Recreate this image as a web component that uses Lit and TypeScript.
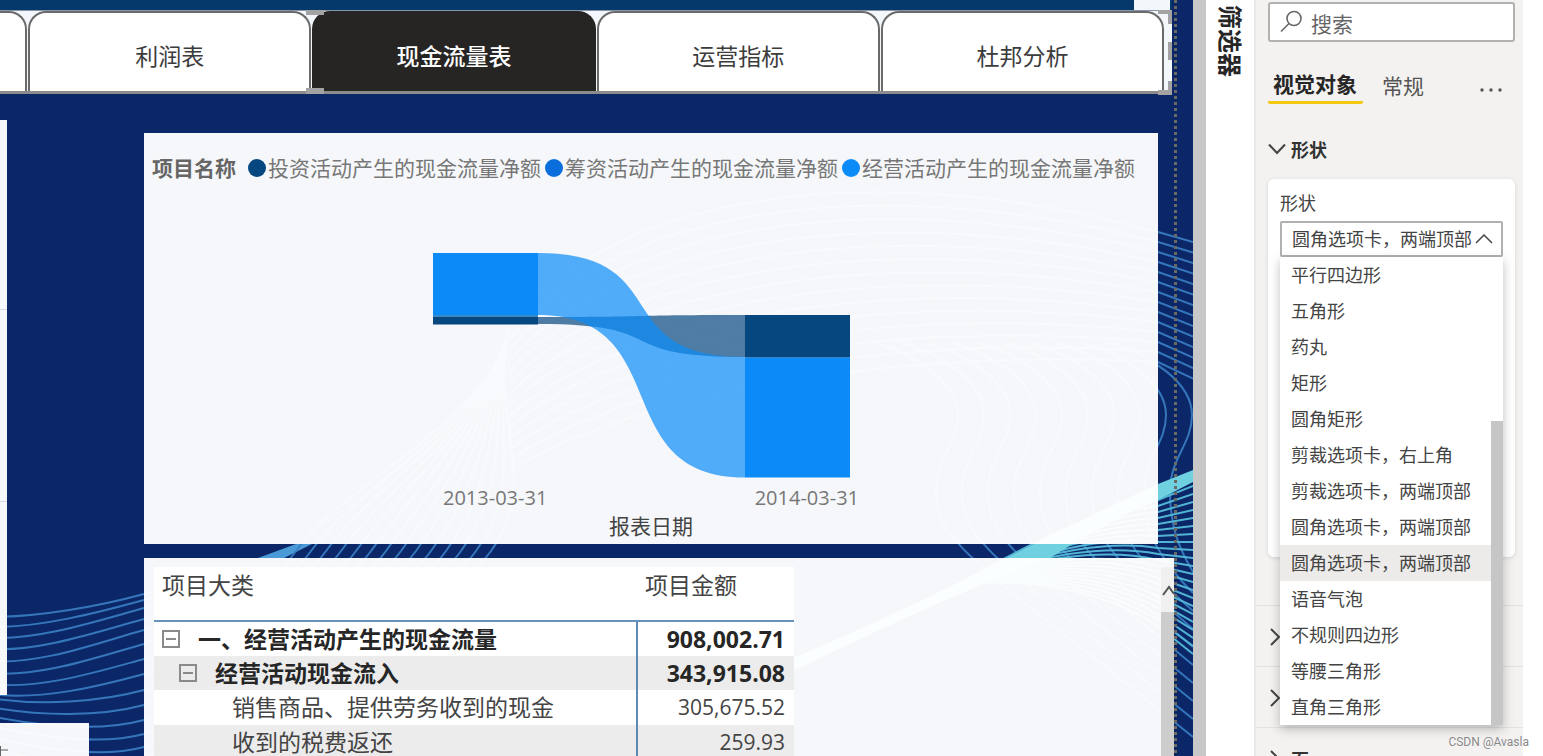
import { LitElement, html, svg, css } from "lit";
import { customElement, property, state } from "lit/decorators.js";
import { classMap } from "lit/directives/class-map.js";

const range = (n: number) => Array.from({ length: n }, (_, i) => i);

@customElement("wave-backdrop")
class WaveBackdrop extends LitElement {
  static styles = css`
    :host { display: block; position: absolute; inset: 0; }
    svg { width: 100%; height: 100%; display: block; }
    .wave { fill: none; stroke: #3a80c4; stroke-width: 2; opacity: 0.9; }
    .fan { fill: none; stroke: #52b4d4; stroke-width: 2; }
    .ribbon { fill: #6fd0e0; }
  `;

  private leftStart = [617, 627, 638, 649, 661, 673, 684, 694, 698, 707, 716, 726, 737, 748];
  private leftMid = [594, 600, 608, 619, 630, 644, 659, 674, 690, 705, 720, 734, 747, 758];

  render() {
    return html`
      <svg viewBox="0 0 1193 756" preserveAspectRatio="xMaxYMin slice" aria-hidden="true">
        <path fill="#4a9ad8" d="M258 558 L296 544 L312 544 L284 558 Z" />
        ${this.leftStart.map((y, i) => {
          const m = this.leftMid[i];
          const x = 296 + i * 15;
          return svg`<path class="wave" d="M-10 ${y} C40 ${y + i} 100 ${m + 12} 144 ${m} C230 ${m - 30} ${x - 50} 620 ${x} 551 S490 420 508 330" />`;
        })}
        ${range(14).map((i) => {
          const y = 232 + i * 10;
          return svg`<path class="wave" d="M508 ${330 + i * 11} C600 ${200 + i * 16} 860 ${150 + i * 15} 1158 ${y} L1193 ${y + 10 + i / 2}" />`;
        })}
        ${range(10).map((i) => {
          const s = i * 26;
          return svg`<path class="wave" d="M${1110 - s} 343 C${1150 - s} 355 ${1192 - s} 382 ${1192 - s} 415 C${1192 - s} 445 ${1168 - s} 460 ${1170 - s} 495 C${1171 - s} 530 ${1180 - s + i} 550 ${1193 - s * 0.4} ${572 + i * 10} L1193 ${575 + i * 18}" />`;
        })}
        ${range(22).map((j) => svg`<path class="fan" d="M960 584 Q1080 ${512 + j * 3} 1158 ${500 + j * 6} L1193 ${486 + j * 8}" />`)}
        <path class="ribbon" d="M1193 470 L1158 484 Q1080 520 1007 558 Q880 624 740 680 L800 668 Q960 590 1050 558 Q1110 520 1158 500 L1193 482 Z" />
      </svg>
    `;
  }
}

@customElement("page-tabs")
class PageTabs extends LitElement {
  static styles = css`
    :host { display: block; position: relative; margin-right: 21px; }
    .strip {
      display: flex; gap: 1px; height: 84px; box-sizing: border-box; padding-right: 8px;
      background: #f3f6fa; border-top: 1px solid #8496a8; border-bottom: 3px solid #8c8c8c;
    }
    button {
      flex: 1; margin: 0; padding: 8px 0 0; font: inherit; font-size: 23px; line-height: 32px;
      color: #3c3c3c; background: #fff; border: 2px solid #6a6a6a; border-bottom: 0;
      border-radius: 18px 18px 0 0;
    }
    .cut { flex: 0 0 27px; border-left: 0; border-radius: 0 18px 0 0; }
    .on { color: #fff; background: #262523; border-color: #262523; font-weight: 500; }
    .grip { position: absolute; background: #a3a3a3; }
    .tl { left: 306px; top: 0; width: 18px; height: 5px; }
    .bl { left: 306px; bottom: 0; width: 18px; height: 6px; }
    .corner { position: absolute; right: 0; width: 14px; height: 14px; box-sizing: border-box; border: 0 solid #a3a3a3; }
    .tr { top: 0; border-width: 4px 4px 0 0; }
    .br { bottom: -1px; border-width: 0 4px 5px 0; }
    .mid { right: 0; top: 32px; width: 4px; height: 18px; }
  `;
  @state() private active = "现金流量表";

  render() {
    return html`
      <div class="strip">
        <button class="cut" aria-label="上一页"></button>
        ${["利润表", "现金流量表", "运营指标", "杜邦分析"].map(
          (t) => html`<button class=${classMap({ on: t === this.active })} @click=${() => (this.active = t)}>${t}</button>`
        )}
      </div>
      <span class="grip tl"></span><span class="grip bl"></span><span class="grip mid"></span>
      <span class="corner tr"></span><span class="corner br"></span>
    `;
  }
}

@customElement("flow-chart")
class FlowChart extends LitElement {
  static styles = css`
    :host { display: block; box-sizing: border-box; height: 411px; padding: 22px 8px 0; background: rgba(255, 255, 255, 0.965); }
    .legend { display: flex; align-items: center; gap: 4px; font-size: 21px; line-height: 26px; color: #777; white-space: nowrap; }
    .name { font-weight: 700; color: #666; margin-right: 8px; }
    .item { display: flex; align-items: center; gap: 2px; }
    .dot { width: 18px; height: 18px; border-radius: 50%; }
    .navy { background: #07477f; }
    .mid { background: #0a6fdc; }
    .sky { background: #0a8bf8; }
    .plot { display: block; width: 438px; height: 230px; margin: 69px auto 6px; }
    .axis { display: flex; justify-content: space-between; width: 416px; margin: 0 auto; font-size: 20px; line-height: 24px; color: #777; }
    .title { margin: 2px 0 0; text-align: center; font-size: 21px; line-height: 28px; color: #444; }
  `;
  render() {
    return html`
      <div class="legend">
        <span class="name">项目名称</span>
        <span class="item"><i class="dot navy"></i>投资活动产生的现金流量净额</span>
        <span class="item"><i class="dot mid"></i>筹资活动产生的现金流量净额</span>
        <span class="item"><i class="dot sky"></i>经营活动产生的现金流量净额</span>
      </div>
      <svg class="plot" viewBox="432 250 438 230" role="img" aria-label="现金流量净额">
        <path fill="#07477f" fill-opacity=".7" d="M538 317 C677 317 606 315 745 315 V357 C606 357 677 324 538 324 Z" />
        <path fill="#0a8bf8" fill-opacity=".7" d="M538 253 C677 253 606 357 745 357 V477.500 C606 477.500 677 315 538 315 Z" />
        <rect x="433" y="253" width="105" height="62" fill="#0a8bf8" />
        <rect x="433" y="315" width="105" height="2" fill="#3b86c4" />
        <rect x="433" y="317" width="105" height="7.500" fill="#07477f" />
        <rect x="745" y="315" width="105" height="42" fill="#07477f" />
        <rect x="745" y="357" width="105" height="1" fill="#3b86c4" />
        <rect x="745" y="358" width="105" height="119.500" fill="#0a8bf8" />
      </svg>
      <div class="axis"><span>2013-03-31</span><span>2014-03-31</span></div>
      <p class="title">报表日期</p>
    `;
  }
}

interface Row { label: string; value: string; level: number; }

@customElement("cash-table")
class CashTable extends LitElement {
  static styles = css`
    :host { display: grid; grid-template-columns: 1fr 13px; flex: 1; min-height: 0; padding-top: 9px; background: rgba(255, 255, 255, 0.965); }
    table { border-collapse: collapse; table-layout: fixed; width: 640px; margin-left: 10px; align-self: start; font-size: 23px; color: #444; background: #fff; }
    th, td { padding: 0; white-space: nowrap; }
    thead th { height: 54px; box-sizing: border-box; border-bottom: 2px solid #6a93ba; font-weight: 400; text-align: left; vertical-align: top; line-height: 36px; padding-left: 8px; }
    .amount { width: 157px; }
    tbody tr { height: 34px; line-height: 34px; }
    tbody tr.level2 { height: 35px; line-height: 35px; }
    tbody tr:nth-child(even) { background: #ececec; }
    tbody th { font-weight: inherit; text-align: left; border-right: 2px solid #5e8ab3; }
    tbody td { text-align: right; padding-right: 9px; }
    .strong { font-weight: 700; color: #262626; }
    .cell { display: flex; align-items: center; gap: 18px; }
    .level0 .cell { padding-left: 8px; }
    .level1 .cell { padding-left: 25px; }
    .level2 .cell { padding-left: 78px; }
    .level2 td { font-size: 21px; }
    button { width: 18px; height: 18px; padding: 0; box-sizing: border-box; border: 2px solid #8a8a8a; background: none; display: grid; place-items: center; }
    .minus { width: 10px; height: 2px; background: #8a8a8a; }
    .scroll { display: flex; flex-direction: column; }
    .up { height: 45px; background: #f0f0f0; display: flex; align-items: center; justify-content: center; }
    .up svg { width: 13px; height: 12px; }
    .thumb { flex: 1; background: #cdcdcd; }
  `;
  @property({ attribute: false }) rows: Row[] = [
    { label: "一、经营活动产生的现金流量", value: "908,002.71", level: 0 },
    { label: "经营活动现金流入", value: "343,915.08", level: 1 },
    { label: "销售商品、提供劳务收到的现金", value: "305,675.52", level: 2 },
    { label: "收到的税费返还", value: "259.93", level: 2 },
  ];
  render() {
    return html`
      <table>
        <thead><tr><th scope="col">项目大类</th><th class="amount" scope="col">项目金额</th></tr></thead>
        <tbody>
          ${this.rows.map(
            (r) => html`<tr class="level${r.level} ${r.level < 2 ? "strong" : ""}">
              <th scope="row"><div class="cell">
                ${r.level < 2 ? html`<button aria-label="折叠"><span class="minus"></span></button>` : ""}
                <span>${r.label}</span>
              </div></th>
              <td>${r.value}</td>
            </tr>`
          )}
        </tbody>
      </table>
      <div class="scroll">
        <div class="up"><svg viewBox="0 0 13 12"><path d="M2 11 L8 3 L13 10" fill="none" stroke="#555" stroke-width="2" /></svg></div>
        <div class="thumb"></div>
      </div>
    `;
  }
}

@customElement("report-canvas")
class ReportCanvas extends LitElement {
  static styles = css`
    :host { display: flex; flex-direction: column; position: relative; overflow: hidden; background: #0b2768; min-width: 0; }
    .band { position: relative; display: flex; justify-content: flex-end; height: 10px; margin-right: 21px; background: #05396c; }
    .gap { width: 36px; margin-right: 2px; background: #f3f6fa; }
    .body { position: relative; flex: 1; min-height: 0; display: flex; }
    .side { flex: 0 0 144px; display: flex; flex-direction: column; gap: 28px; padding-top: 26px; }
    .card { background: rgba(255, 255, 255, 0.965); }
    .tall { width: 7px; height: 575px; display: grid; grid-template-rows: 190px 192px 1fr; }
    .cell { border-bottom: 1px solid #d3dbe6; }
    .cell:last-child { border: 0; }
    .low { width: 89px; flex: 1; display: flex; align-items: flex-end; }
    .low svg { width: 10px; height: 12px; }
    .main { flex: 1; min-width: 0; display: flex; flex-direction: column; gap: 14px; padding-top: 39px; }
    flow-chart { margin-right: 35px; }
    cash-table { margin-right: 19px; }
    .edge { position: absolute; top: 0; bottom: 0; right: 16px; width: 3px; background: repeating-linear-gradient(#6b6a62 0 3px, transparent 3px 6px); }
  `;
  render() {
    return html`
      <wave-backdrop></wave-backdrop>
      <div class="band"><div class="gap"></div></div>
      <page-tabs></page-tabs>
      <div class="body">
        <div class="side">
          <div class="card tall"><div class="cell"></div><div class="cell"></div><div class="cell"></div></div>
          <div class="card low"><svg viewBox="0 0 10 12"><path d="M0 2 H1 V12 H0 Z" fill="#666" /><path d="M1 6 H8" stroke="#aaa" stroke-width="2" /></svg></div>
        </div>
        <div class="main"><flow-chart></flow-chart><cash-table></cash-table></div>
      </div>
      <div class="edge"></div>
    `;
  }
}

@customElement("format-pane")
class FormatPane extends LitElement {
  static styles = css`
    :host { display: flex; flex-direction: column; box-sizing: border-box; border-left: 2px solid #e9e8e7; background: #f3f2f1; overflow: hidden; padding-top: 2px; }
    button { font: inherit; color: inherit; background: none; border: 0; padding: 0; margin: 0; }
    svg { display: block; fill: none; stroke: #444; stroke-width: 2; }
    .search { display: flex; align-items: center; gap: 9px; height: 40px; box-sizing: border-box; margin: 0 8px 0 12px; padding: 0 10px; background: #fff; border: 2px solid #b3b1af; border-radius: 3px; }
    .search svg { flex: none; width: 22px; height: 24px; }
    .search input { flex: 1; min-width: 0; font: inherit; font-size: 21px; line-height: 32px; border: 0; padding: 4px 0 0; outline: 0; background: none; color: #555; }
    .search input::placeholder { color: #666; opacity: 1; }
    .tabs { display: flex; align-items: flex-start; margin: 25px 8px 0 12px; font-size: 21px; line-height: 34px; color: #555; }
    .tabs .on { padding: 0 6px 0 5px; font-weight: 700; color: #262626; border-bottom: 3px solid #f2c811; border-radius: 2px; }
    .normal { margin-left: 19px; padding-top: 2px; }
    .more { margin: 20px 12px 0 auto; }
    .more svg { width: 24px; height: 6px; fill: #555; stroke: none; }
    .open { display: flex; align-items: center; gap: 5px; height: 30px; margin: 32px 12px 0; font-size: 18px; font-weight: 700; color: #333; }
    .open svg { width: 18px; height: 12px; }
    .card { height: 378px; flex: none; box-sizing: border-box; margin: 17px 8px 48px 12px; padding: 12px; background: #fff; border-radius: 6px; box-shadow: 0 1px 4px rgba(0, 0, 0, 0.12); font-size: 18px; color: #444; }
    .card label { display: block; line-height: 24px; margin-bottom: 6px; }
    .field { position: relative; }
    select { display: block; width: 100%; height: 36px; box-sizing: border-box; appearance: none; font: inherit; color: inherit; background: #fff; border: 2px solid #b3b1af; border-radius: 2px; padding: 0 0 0 10px; }
    .caret { position: absolute; right: 9px; top: 12px; width: 20px; height: 12px; pointer-events: none; }
    .popup { position: absolute; z-index: 2; top: 36px; left: 0; right: 0; display: grid; grid-template-columns: 1fr 12px; background: #fff; box-shadow: 0 4px 10px rgba(0, 0, 0, 0.25); }
    ul { list-style: none; margin: 0; padding: 0; }
    li { height: 36px; line-height: 36px; padding-left: 11px; white-space: nowrap; }
    li.on { background: #ecebe9; }
    .thumb { align-self: end; height: 304px; background: #c6c6c6; }
    .row { flex: none; display: flex; align-items: center; gap: 9px; height: 61px; border-top: 1px solid #e3e2e0; padding: 2px 13px 0; box-sizing: border-box; font-size: 18px; font-weight: 700; color: #333; }
    .row svg { width: 13px; height: 18px; }
  `;
  private shapes = [
    "平行四边形", "五角形", "药丸", "矩形", "圆角矩形", "剪裁选项卡，右上角", "剪裁选项卡，两端顶部",
    "圆角选项卡，两端顶部", "圆角选项卡，两端顶部", "语音气泡", "不规则四边形", "等腰三角形", "直角三角形",
  ];
  @state() private picked = 8;

  private chevron() {
    return html`<svg viewBox="0 0 13 18"><path d="M2 1 L10 9 L2 17" /></svg>`;
  }

  render() {
    return html`
      <label class="search">
        <svg viewBox="0 0 22 24"><circle cx="14" cy="8.500" r="7" stroke-width="1.600" stroke="#666" /><path d="M9 13.500 L1 21.500" stroke-width="1.600" stroke="#666" /></svg>
        <input type="text" placeholder="搜索" aria-label="搜索" />
      </label>
      <div class="tabs">
        <button class="on">视觉对象</button><button class="normal">常规</button>
        <button class="more" aria-label="更多"><svg viewBox="0 0 24 6"><circle cx="3" cy="3" r="1.700" /><circle cx="12" cy="3" r="1.700" /><circle cx="21" cy="3" r="1.700" /></svg></button>
      </div>
      <button class="open"><svg viewBox="0 0 18 12"><path d="M1 1.500 L9 10 L17 1.500" /></svg>形状</button>
      <div class="card">
        <label for="shape">形状</label>
        <div class="field">
          <select id="shape"><option>${this.shapes[this.picked]}</option></select>
          <svg class="caret" viewBox="0 0 20 12"><path d="M2 10 L10 2 L18 10" stroke-width="1.500" /></svg>
          <div class="popup">
            <ul role="listbox" aria-label="形状">
              ${this.shapes.map(
                (s, i) => html`<li role="option" aria-selected=${i === this.picked} class=${classMap({ on: i === this.picked })} @click=${() => (this.picked = i)}>${s}</li>`
              )}
            </ul>
            <div class="thumb"></div>
          </div>
        </div>
      </div>
      <button class="row" aria-label="展开">${this.chevron()}</button>
      <button class="row" aria-label="展开">${this.chevron()}</button>
      <button class="row">${this.chevron()}页</button>
    `;
  }
}

@customElement("app-root")
class AppRoot extends LitElement {
  static styles = css`
    :host {
      display: grid; grid-template-columns: minmax(0, 1fr) 13px 48px 269px; height: 100vh; overflow: hidden;
      box-sizing: border-box; padding-right: 20px; position: relative; background: #fff;
      font-family: "Open Sans", "Noto Sans CJK SC", sans-serif;
    }
    .split { background: #c8c8c8; }
    .rail { display: flex; justify-content: center; align-items: flex-start; padding-top: 5px; }
    .rail button { writing-mode: vertical-rl; text-orientation: sideways; font: inherit; font-size: 24px; line-height: 32px; font-weight: 700; color: #262626; border: 0; padding: 0; background: none; }
    .mark { position: absolute; right: 14px; bottom: 6px; font-family: Roboto, sans-serif; font-size: 12px; line-height: 16px; color: #888; text-shadow: 0 0 1px #fff; }
  `;
  render() {
    return html`
      <report-canvas></report-canvas>
      <div class="split"></div>
      <div class="rail"><button>筛选器</button></div>
      <format-pane></format-pane>
      <span class="mark">CSDN @Avasla</span>
    `;
  }
}
